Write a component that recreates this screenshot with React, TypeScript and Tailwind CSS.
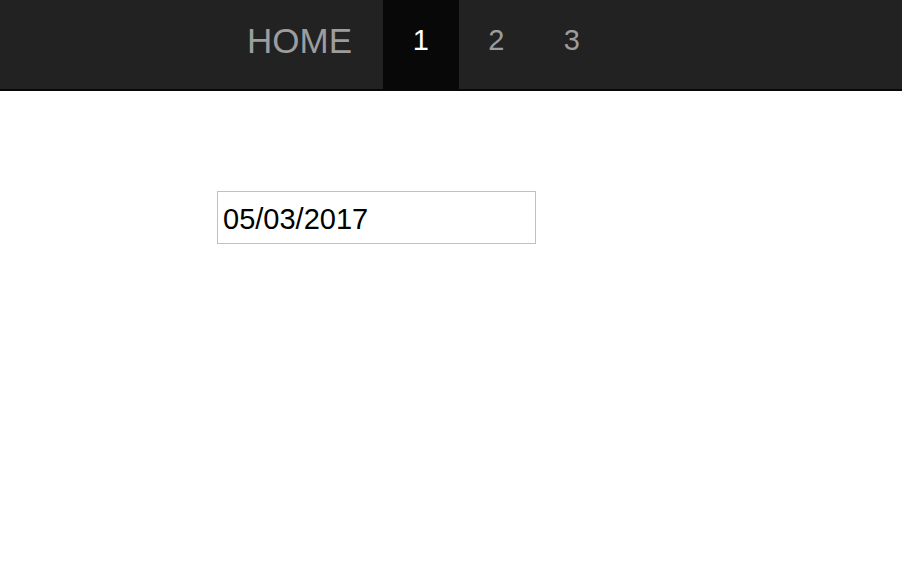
import { useState } from "react";

const navItems = ["1", "2", "3"];

export default function App() {
  const [active, setActive] = useState("1");
  const [date, setDate] = useState("05/03/2017");

  return (
    <div className="min-h-screen bg-white font-['Liberation_Sans',Arial,sans-serif]">
      <nav className="h-[91px] border-b-2 border-[#080808] bg-[#222222]">
        <div className="flex h-full items-stretch pl-[247px]">
          <a
            href="#"
            className="mr-[31px] flex items-center pb-[8px] text-[35px] leading-none text-[#9d9d9d]"
          >
            HOME
          </a>
          {navItems.map((item) => (
            <a
              key={item}
              href="#"
              onClick={(e) => {
                e.preventDefault();
                setActive(item);
              }}
              className={
                item === active
                  ? "flex w-[75.5px] items-center justify-center bg-[#080808] pb-[8px] text-[29px] leading-none text-white"
                  : "flex w-[75.5px] items-center justify-center pb-[8px] text-[29px] leading-none text-[#9d9d9d]"
              }
            >
              {item}
            </a>
          ))}
        </div>
      </nav>

      <main className="pl-[217px] pt-[100px]">
        <input
          type="text"
          value={date}
          onChange={(e) => setDate(e.target.value)}
          className="h-[53px] w-[319px] border border-[#c0c0c0] bg-white pl-[5px] pt-[3px] text-[29px] text-black outline-none"
        />
      </main>
    </div>
  );
}
